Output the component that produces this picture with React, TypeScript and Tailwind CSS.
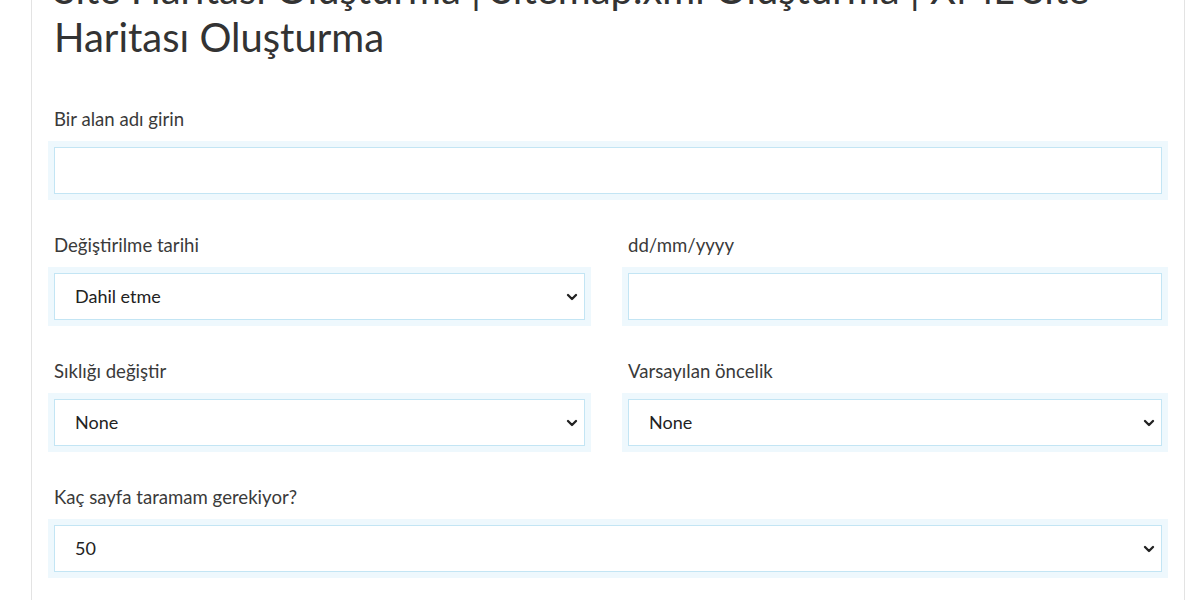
import { ChevronDown } from 'lucide-react'

// ── Field pieces ───────────────────────────────────────────────────────────────

function FieldLabel({ children }: { children: React.ReactNode }) {
  return (
    <label className="block px-[6px] text-[18.6px] leading-[26px] text-[#3a3a3a]">{children}</label>
  )
}

function Glow({ children }: { children: React.ReactNode }) {
  return <div className="mt-[9px] bg-[#eef8fd] p-[6px]">{children}</div>
}

function TextField({ label }: { label: string }) {
  return (
    <div>
      <FieldLabel>{label}</FieldLabel>
      <Glow>
        <input
          type="text"
          className="block h-[47px] w-full border border-[#c3e5f4] bg-white px-[20px] text-[18px] text-[#222] outline-none"
        />
      </Glow>
    </div>
  )
}

function SelectField({ label, value }: { label: string; value: string }) {
  return (
    <div>
      <FieldLabel>{label}</FieldLabel>
      <Glow>
        <div className="relative">
          <select
            defaultValue={value}
            className="block h-[47px] w-full appearance-none border border-[#c3e5f4] bg-white pl-[20px] pr-10 text-[18px] text-[#222] outline-none"
          >
            <option>{value}</option>
          </select>
          <ChevronDown
            className="pointer-events-none absolute right-[5px] top-1/2 h-[16px] w-[16px] -translate-y-1/2 text-[#222]"
            strokeWidth={3.5}
            aria-hidden
          />
        </div>
      </Glow>
    </div>
  )
}

// ── Page ───────────────────────────────────────────────────────────────────────

export default function App() {
  return (
    <div className="h-[600px] overflow-hidden bg-white font-['Lato','Noto_Sans',sans-serif]">
      <div className="ml-[31px] flow-root h-full w-[1154px] border-x border-[#e3e3e3] pl-[16px] pr-[16px]">
        <h1 className="mt-[-35px] px-[6px] text-[40px] font-normal leading-[48px] text-[#333]">
          Site Haritası Oluşturma | Sitemap.xml Oluşturma | XML Site
          <br />
          Haritası Oluşturma
        </h1>

        <div className="mt-[45px] grid grid-cols-[543px_minmax(0,1fr)] gap-x-[31px] gap-y-[32px]">
          <div className="col-span-2">
            <TextField label="Bir alan adı girin" />
          </div>
          <SelectField label="Değiştirilme tarihi" value="Dahil etme" />
          <TextField label="dd/mm/yyyy" />
          <SelectField label="Sıklığı değiştir" value="None" />
          <SelectField label="Varsayılan öncelik" value="None" />
          <div className="col-span-2">
            <SelectField label="Kaç sayfa taramam gerekiyor?" value="50" />
          </div>
        </div>
      </div>
    </div>
  )
}
